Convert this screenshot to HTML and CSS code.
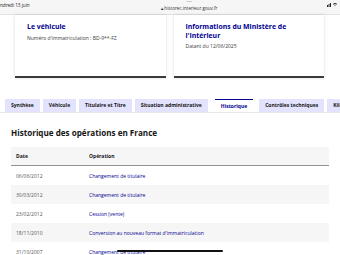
FILE: index.html
```html
<!DOCTYPE html>
<html>
    <head>
        <meta charset="utf-8" />
        <title>Historec - Historique</title>
        <link rel="stylesheet" href="styles.css">
    </head>
    <body>
        <div class="statusbar">
            <span class="sb-date">ndredi 13 juin</span>
            <div class="sb-center">
                <span class="sb-dots">&bull;&bull;&bull;</span>
                <span class="sb-url">&#x1F512;&#xFE0E; historec.interieur.gouv.fr</span>
            </div>
            <span class="sb-icons">
                <svg width="12" height="5" viewBox="0 0 12 5">
                    <rect x="0" y="3" width="1" height="2" fill="#222"/>
                    <rect x="1.5" y="2" width="1" height="3" fill="#222"/>
                    <rect x="3" y="1" width="1" height="4" fill="#222"/>
                    <path d="M6 2 Q8 0 10 2 L9.3 2.7 Q8 1.5 6.7 2.7 Z M7.4 3.4 Q8 2.8 8.6 3.4 L8 4.2 Z" fill="#222"/>
                </svg>
            </span>
        </div>

        <div class="cards">
            <div class="card">
                <div class="card-title">Le véhicule</div>
                <div class="card-desc">Numéro d'immatriculation : BD-9**-FZ</div>
            </div>
            <div class="card">
                <div class="card-title">Informations du Ministère de l'Intérieur</div>
                <div class="card-desc">Datant du 12/06/2025</div>
            </div>
        </div>

        <div class="tabs">
            <span class="tab">Synthèse</span>
            <span class="tab">Véhicule</span>
            <span class="tab">Titulaire et Titre</span>
            <span class="tab">Situation administrative</span>
            <span class="tab tab-active">Historique</span>
            <span class="tab">Contrôles techniques</span>
            <span class="tab">Kilométrage</span>
        </div>

        <div class="panel">
            <h2>Historique des opérations en France</h2>
            <table class="history">
                <thead>
                    <tr><th class="col-date">Date</th><th>Opération</th></tr>
                </thead>
                <tbody>
                    <tr><td class="col-date">06/06/2012</td><td><a href="#">Changement de titulaire</a></td></tr>
                    <tr><td class="col-date">30/03/2012</td><td><a href="#">Changement de titulaire</a></td></tr>
                    <tr><td class="col-date">23/02/2012</td><td><a href="#">Cession (vente)</a></td></tr>
                    <tr><td class="col-date">18/11/2010</td><td><a href="#">Conversion au nouveau format d'immatriculation</a></td></tr>
                    <tr><td class="col-date">31/10/2007</td><td><a href="#">Changement de titulaire</a></td></tr>
                </tbody>
            </table>
        </div>

        <div class="home-bar"></div>
    </body>
</html>
```

FILE: styles.css
```css
body {
	margin: 0;
	font-family: "Open Sans", "DejaVu Sans", sans-serif;
	color: #161616;
	background: #fff;
	height: 255px;
	overflow: hidden;
	position: relative;
}

.statusbar {
	height: 14px;
	background: #f6f6f6;
	border-bottom: 1px solid #e2e2e2;
	display: flex;
	justify-content: space-between;
	align-items: flex-start;
	font-size: 4.6px;
	color: #222;
}

.sb-date {
	margin-top: 2px;
}

.sb-center {
	display: flex;
	flex-direction: column;
	align-items: center;
	margin-left: 22px;
	line-height: 5px;
}

.sb-dots {
	font-size: 3px;
	color: #777;
	letter-spacing: 0.5px;
}

.sb-url {
	margin-top: 1px;
	color: #333;
}

.sb-icons {
	margin-top: 2px;
	margin-right: 1px;
	display: flex;
}

.cards {
	display: flex;
	gap: 8px;
	padding: 0 16px 0 15px;
}

.card {
	flex: 1;
	height: 63px;
	padding: 8px 11px 0 12px;
	box-sizing: border-box;
	background: #fff;
	box-shadow: 0 0 3px rgba(0, 0, 0, 0.15);
	border-bottom: 2px solid #3a3a3a;
}

.card-title {
	font-size: 6.9px;
	font-weight: 700;
	color: #000091;
	line-height: 8.5px;
}

.card-desc {
	font-size: 5px;
	color: #3a3a3a;
	margin-top: 3px;
}

.tabs {
	display: flex;
	gap: 3px;
	margin-top: 21px;
	padding-left: 5px;
	white-space: nowrap;
	overflow: hidden;
	border-bottom: 1px solid #e8e8e8;
}

.tab {
	flex: none;
	height: 13px;
	line-height: 13px;
	padding: 0 6px;
	background: #e3e3fd;
	font-size: 5px;
	font-weight: 700;
	color: #161616;
}

.tab-active {
	background: #fff;
	color: #000091;
	border-top: 1px solid #000091;
	line-height: 12px;
	box-sizing: border-box;
	margin: 0 3px 0 4px;
}

.panel {
	padding: 0 11px;
}

h2 {
	margin: 15px 0 9px 0;
	font-size: 8.1px;
	font-weight: 700;
	line-height: 10px;
	color: #161616;
}

.history {
	width: 100%;
	border-collapse: collapse;
	font-size: 5px;
}

.history th {
	text-align: left;
	font-weight: 700;
	height: 18px;
	padding: 0 5px;
	background: #f6f6f6;
	border-bottom: 1px solid #929292;
}

.history td {
	height: 19px;
	padding: 0 5px;
	color: #555;
}

.history tbody tr:nth-child(even) td {
	background: #f6f6f6;
}

.col-date {
	width: 63px;
}

.history a {
	color: #000091;
	text-decoration: none;
}

.home-bar {
	position: absolute;
	left: 117px;
	top: 250px;
	width: 106px;
	height: 2px;
	background: #111;
	border-radius: 1px;
}
```
